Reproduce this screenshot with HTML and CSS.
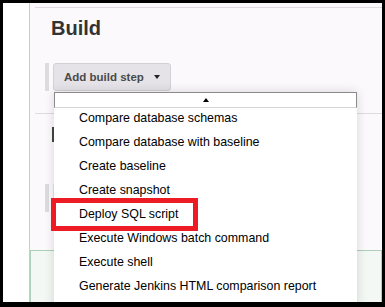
FILE: index.html
```html
<!DOCTYPE html>
<html lang="en">
<head>
    <meta charset="UTF-8">
    <meta name="viewport" content="width=device-width, initial-scale=1.0">
    <title>Build</title>
    <link rel="stylesheet" href="styles.css">
</head>
<body>

    <div class="screen">
        <!-- Left navigation column (empty at this scroll position) -->
        <div class="side-panel"></div>

        <div class="config">
            <!-- Build section with the open step menu -->
            <div class="section">
                <h2 class="section-title">Build</h2>
                <div class="step-row">
                    <span class="step-marker"></span>
                    <button class="step-button">Add build step <span class="caret"></span></button>

                    <!-- Dropdown of available build steps -->
                    <div class="step-menu">
                        <div class="menu-scroll"><span class="caret-up"></span></div>
                        <ul class="menu-list">
                            <li>Compare database schemas</li>
                            <li>Compare database with baseline</li>
                            <li>Create baseline</li>
                            <li>Create snapshot</li>
                            <li class="picked">Deploy SQL script<span class="callout"></span></li>
                            <li>Execute Windows batch command</li>
                            <li>Execute shell</li>
                            <li>Generate Jenkins HTML comparison report</li>
                        </ul>
                    </div>
                </div>
            </div>

            <!-- Next section, only its left edge shows beside the menu -->
            <div class="section">
                <div class="title-stub"></div>
                <div class="step-row">
                    <span class="step-marker"></span>
                    <span class="button-stub"></span>
                </div>
            </div>

            <!-- Save / Apply bar -->
            <div class="bottom-bar"></div>
        </div>
    </div>

</body>
</html>
```

FILE: styles.css
```css
/* Black frame around the screenshot */
body {
    margin: 0;
    background-color: #000;
    font-family: "Liberation Sans", Arial, sans-serif;
}

.screen {
    display: flex;
    width: 379px;
    height: 299px;
    margin: 3px 3px 5px 3px;
    overflow: hidden;
    background-color: #fcf9fc;
}

/* White column on the left */
.side-panel {
    width: 26px;
    flex-shrink: 0;
    background-color: #fff;
    border-right: 1px solid #cbcbcb;
}

.config {
    flex: 1;
    padding-top: 4px;
}

/* Each config section starts with a thin rule */
.section {
    margin-left: 5px;
    border-top: 1px solid #dedcde;
}

.section + .section {
    margin-top: 22px;
}

.section-title {
    margin: 0 0 0 16px;
    padding-top: 8px;
    font-size: 20px;
    line-height: 24px;
    font-weight: bold;
    color: #333;
}

/* Left stroke of the heading hidden by the menu */
.title-stub {
    width: 3px;
    height: 15px;
    margin: 13px 0 0 17px;
    background-color: #444;
}

.step-row {
    position: relative;
    display: flex;
    align-items: center;
    margin-top: 23px;
    padding-left: 10px;
}

.title-stub + .step-row {
    margin-top: 41px;
}

.step-marker {
    width: 4px;
    height: 28px;
    margin-right: 4px;
    background-color: #dcdbdd;
}

/* The "Add build step" button */
.step-button {
    display: flex;
    align-items: center;
    height: 28px;
    padding: 0 10px;
    font-family: "Liberation Sans", Arial, sans-serif;
    font-size: 11.5px;
    font-weight: bold;
    color: #4a4a4a;
    background-color: #e5e3e7;
    border: 1px solid #d3d1d5;
    border-radius: 3px;
}

.button-stub {
    width: 60px;
    height: 30px;
    background-color: #e5e3e7;
    border-radius: 3px;
}

.caret {
    margin-left: 10px;
    border-left: 3px solid transparent;
    border-right: 3px solid transparent;
    border-top: 4px solid #222;
}

/* Open dropdown, lies over the rest of the page */
.step-menu {
    position: absolute;
    left: 19px;
    top: 29px;
    width: 303px;
    background-color: #fff;
    box-shadow: 0 0 10px rgba(0, 0, 0, 0.15);
    z-index: 2;
}

.menu-scroll {
    display: flex;
    justify-content: center;
    align-items: center;
    height: 14px;
    border: 1px solid #8a8a8a;
    border-bottom-color: #d4d4d4;
}

.caret-up {
    border-left: 3px solid transparent;
    border-right: 3px solid transparent;
    border-bottom: 4px solid #000;
}

.menu-list {
    list-style-type: none;
    margin: 0;
    padding: 0 0 20px 0;
}

.menu-list li {
    position: relative;
    padding: 0 0 4px 25px;
    font-size: 12.4px;
    line-height: 20px;
    color: #000;
}

/* Red annotation box round the chosen item */
.callout {
    position: absolute;
    left: -3px;
    top: -6px;
    width: 147px;
    height: 33px;
    box-sizing: border-box;
    border: 5px solid #ed1c24;
}

.bottom-bar {
    height: 100px;
    margin-top: 37px;
    background-color: #f3f8f4;
    border: 1px solid #acd0b9;
}
```
